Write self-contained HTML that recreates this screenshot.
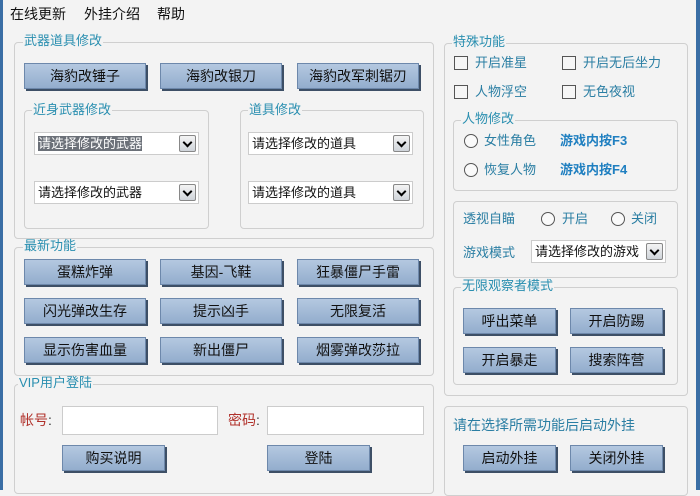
<!DOCTYPE html>
<html><head><meta charset="utf-8"><style>
*{box-sizing:border-box;margin:0;padding:0}
body{width:700px;height:490px;overflow:hidden;background:#f3f3f3;font-family:"Liberation Sans","Noto Sans CJK SC",sans-serif;font-size:13px;color:#111;position:relative}
.a{position:absolute}
.g{position:absolute;border:1px solid #cfcfcf;border-radius:4px}
.t{position:absolute;background:#f3f3f3;color:#2a8fb0;font-size:13px;line-height:14px;padding:0 1px}
.b{position:absolute;background:linear-gradient(#b4c8e0,#93adcd);border:1px solid #6d88ab;box-shadow:2px 2px 0 #3d4f66;text-align:center;font-size:14px;line-height:24px;color:#111}
.s{position:absolute;background:#fff;border:1px solid #ccc;height:23px;font-size:13px;line-height:21px;padding-left:3px;overflow:hidden;white-space:nowrap}
.s i{position:absolute;right:2px;top:2px;width:17px;height:17px;border:1px solid #888;background:linear-gradient(#f4f4f4,#cfd4da);border-radius:2px;font-style:normal}
.s i:after{content:"";position:absolute;left:4px;top:3px;width:5px;height:5px;border-right:2px solid #000;border-bottom:2px solid #000;transform:rotate(45deg)}
.cb{position:absolute;width:14px;height:14px;border:1px solid #555;background:#f6f6f6}
.rd{position:absolute;width:14px;height:14px;border:1px solid #555;border-radius:50%;background:#fafafa}
.l{position:absolute;font-size:13px;line-height:16px;color:#2a7ea3}
.in{position:absolute;background:#fff;border:1px solid #ccc}
</style></head><body>
<div class="a" style="left:0;top:0;width:3px;height:490px;background:#3a6ea5"></div>
<div class="a" style="right:0;top:0;width:4px;height:490px;background:#3a6ea5"></div>
<div class="a" style="left:10px;top:4px;font-size:14px">在线更新</div>
<div class="a" style="left:84px;top:4px;font-size:14px">外挂介绍</div>
<div class="a" style="left:157px;top:4px;font-size:14px">帮助</div>

<div class="g" style="left:14px;top:42px;width:420px;height:197px"></div>
<div class="t" style="left:23px;top:34px">武器道具修改</div>
<div class="b" style="left:24px;top:63px;width:122px;height:26px">海豹改锤子</div>
<div class="b" style="left:160px;top:63px;width:122px;height:26px">海豹改银刀</div>
<div class="b" style="left:297px;top:63px;width:122px;height:26px">海豹改军刺锯刃</div>
<div class="g" style="left:24px;top:110px;width:185px;height:119px"></div>
<div class="t" style="left:32px;top:103px">近身武器修改</div>
<div class="g" style="left:240px;top:110px;width:184px;height:119px"></div>
<div class="t" style="left:248px;top:103px">道具修改</div>
<div class="s" style="left:34px;top:132px;width:165px"><span style="background:#6b7078;color:#fff">请选择修改的武器</span><i></i></div>
<div class="s" style="left:34px;top:181px;width:165px">请选择修改的武器<i></i></div>
<div class="s" style="left:248px;top:132px;width:165px">请选择修改的道具<i></i></div>
<div class="s" style="left:248px;top:181px;width:165px">请选择修改的道具<i></i></div>

<div class="g" style="left:14px;top:247px;width:420px;height:129px"></div>
<div class="t" style="left:23px;top:239px">最新功能</div>
<div class="b" style="left:24px;top:259px;width:122px;height:26px">蛋糕炸弹</div>
<div class="b" style="left:160px;top:259px;width:122px;height:26px">基因-飞鞋</div>
<div class="b" style="left:297px;top:259px;width:122px;height:26px">狂暴僵尸手雷</div>
<div class="b" style="left:24px;top:298px;width:122px;height:26px">闪光弹改生存</div>
<div class="b" style="left:160px;top:298px;width:122px;height:26px">提示凶手</div>
<div class="b" style="left:297px;top:298px;width:122px;height:26px">无限复活</div>
<div class="b" style="left:24px;top:337px;width:122px;height:26px">显示伤害血量</div>
<div class="b" style="left:160px;top:337px;width:122px;height:26px">新出僵尸</div>
<div class="b" style="left:297px;top:337px;width:122px;height:26px">烟雾弹改莎拉</div>

<div class="g" style="left:14px;top:384px;width:420px;height:110px"></div>
<div class="t" style="left:18px;top:376px">VIP用户登陆</div>
<div class="a" style="left:20px;top:410px;color:#b0302a;font-size:14px">帐号<span style="color:#333">:</span></div>
<div class="in" style="left:62px;top:406px;width:156px;height:29px"></div>
<div class="a" style="left:228px;top:410px;color:#b0302a;font-size:14px">密码<span style="color:#333">:</span></div>
<div class="in" style="left:267px;top:406px;width:157px;height:29px"></div>
<div class="b" style="left:62px;top:445px;width:103px;height:26px">购买说明</div>
<div class="b" style="left:267px;top:445px;width:103px;height:26px">登陆</div>

<div class="g" style="left:444px;top:43px;width:244px;height:353px"></div>
<div class="t" style="left:452px;top:35px">特殊功能</div>
<div class="cb" style="left:454px;top:56px"></div><div class="l" style="left:475px;top:55px">开启准星</div>
<div class="cb" style="left:562px;top:56px"></div><div class="l" style="left:583px;top:55px">开启无后坐力</div>
<div class="cb" style="left:454px;top:85px"></div><div class="l" style="left:475px;top:84px">人物浮空</div>
<div class="cb" style="left:562px;top:85px"></div><div class="l" style="left:583px;top:84px">无色夜视</div>
<div class="g" style="left:453px;top:120px;width:225px;height:71px"></div>
<div class="t" style="left:461px;top:112px">人物修改</div>
<div class="rd" style="left:464px;top:134px"></div><div class="l" style="left:484px;top:133px">女性角色</div>
<div class="l" style="left:560px;top:133px;font-weight:bold;color:#1f7fc0">游戏内按F3</div>
<div class="rd" style="left:464px;top:163px"></div><div class="l" style="left:484px;top:162px">恢复人物</div>
<div class="l" style="left:560px;top:162px;font-weight:bold;color:#1f7fc0">游戏内按F4</div>
<div class="g" style="left:453px;top:201px;width:225px;height:77px"></div>
<div class="l" style="left:463px;top:211px">透视自瞄</div>
<div class="rd" style="left:541px;top:212px"></div><div class="l" style="left:562px;top:211px">开启</div>
<div class="rd" style="left:611px;top:212px"></div><div class="l" style="left:631px;top:211px">关闭</div>
<div class="l" style="left:463px;top:245px">游戏模式</div>
<div class="s" style="left:531px;top:240px;width:135px;height:23px">请选择修改的游戏<i></i></div>
<div class="g" style="left:453px;top:287px;width:225px;height:98px"></div>
<div class="t" style="left:461px;top:279px">无限观察者模式</div>
<div class="b" style="left:463px;top:308px;width:93px;height:26px">呼出菜单</div>
<div class="b" style="left:570px;top:308px;width:93px;height:26px">开启防踢</div>
<div class="b" style="left:463px;top:347px;width:93px;height:26px">开启暴走</div>
<div class="b" style="left:570px;top:347px;width:93px;height:26px">搜索阵营</div>

<div class="g" style="left:444px;top:406px;width:244px;height:90px"></div>
<div class="l" style="left:453px;top:417px;font-size:14px">请在选择所需功能后启动外挂</div>
<div class="b" style="left:463px;top:445px;width:93px;height:26px">启动外挂</div>
<div class="b" style="left:570px;top:445px;width:93px;height:26px">关闭外挂</div>
</body></html>
